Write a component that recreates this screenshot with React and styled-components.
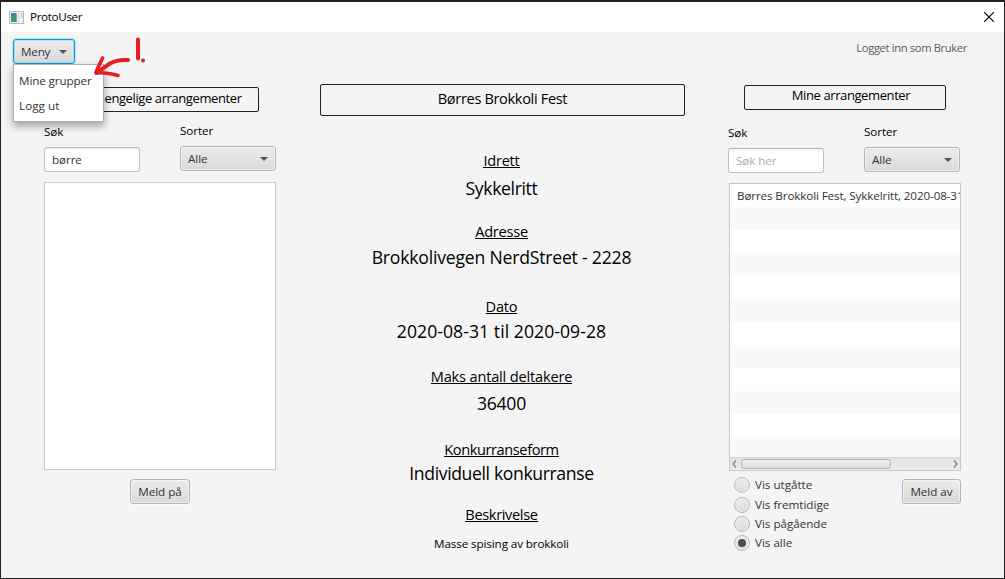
import React from 'react';
import styled, { createGlobalStyle, css } from 'styled-components';

const GlobalStyle = createGlobalStyle`
  * { box-sizing: border-box; }
  body { margin: 0; background: #1f1f1f; overflow: hidden; }
`;

const Window = styled.div`
  position: relative;
  width: 1005px;
  height: 579px;
  display: flex;
  flex-direction: column;
  border: 1px solid #222224;
  border-top-width: 2px;
  background: #f4f4f4;
  color: #333;
  font-family: 'Open Sans', 'Noto Sans', sans-serif;
  font-size: 11.68px;
  line-height: 16px;
  white-space: nowrap;
  overflow: hidden;
`;

const TitleBar = styled.header`
  display: flex;
  align-items: center;
  height: 30px;
  flex: none;
  padding: 0 10px 0 8px;
  background: #fff;
`;

const AppTitle = styled.span`
  margin-left: 6px;
  flex: 1;
  color: #000;
  letter-spacing: -0.35px;
`;

const Header = styled.div`
  display: flex;
  justify-content: space-between;
  align-items: flex-start;
  height: 52px;
  flex: none;
  padding: 7px 37px 0 12px;
`;

const MenuAnchor = styled.div`
  position: relative;
`;

const raised = css`
  border: 1px solid #b5b5b5;
  border-radius: 3px;
  background: linear-gradient(#ececec, #d9d9d9);
  box-shadow: inset 0 0 0 1px rgba(255, 255, 255, 0.55), 0 1px 0 #fbfbfb;
  color: #333;
  font: inherit;
`;

const MenuButton = styled.button`
  ${raised}
  display: flex;
  align-items: center;
  justify-content: space-between;
  width: 62px;
  height: 25px;
  padding: 0 7px;
  border-color: #039ed3;
  box-shadow: inset 0 0 0 1px #b4dff0, 0 0 2px #4fbfe3;
  letter-spacing: -0.2px;
`;

const Caret = styled.i`
  border: 4px solid transparent;
  border-top-color: #555;
  border-bottom: 0;
`;

const Menu = styled.div`
  position: absolute;
  z-index: 1;
  top: 25px;
  left: 0;
  width: 91px;
  height: 58px;
  padding: 3px 5px;
  border: 1px solid #b0b0b0;
  background: #fff;
  box-shadow: 0 4px 8px rgba(0, 0, 0, 0.35);
`;

const MenuItem = styled.div`
  line-height: 25px;
  letter-spacing: ${(p) => p.$spacing || 0}px;
`;

const LoggedIn = styled.span`
  margin-top: 1px;
  color: #5c5c5c;
  font-size: 11.2px;
  letter-spacing: -0.35px;
`;

const Columns = styled.main`
  display: grid;
  grid-template-columns: 232px 365px 233px;
  column-gap: 44px;
  padding-left: 43px;
`;

const Side = styled.section`
  padding-top: ${(p) => p.$top}px;
  margin-left: ${(p) => p.$shift || 0}px;
`;

const Heading = styled.h1`
  height: ${(p) => p.$height}px;
  width: ${(p) => p.$width}px;
  margin: 0 0 0 ${(p) => p.$left || 0}px;
  padding: ${(p) => p.$pad || 0};
  border: 1px solid #222;
  border-radius: 2px;
  color: #000;
  font-size: ${(p) => p.$size}px;
  font-weight: 400;
  line-height: 18px;
  letter-spacing: ${(p) => p.$spacing || 0}px;
  text-align: center;
`;

const Filters = styled.div`
  display: flex;
  justify-content: space-between;
  width: 232px;
  margin-top: ${(p) => p.$top}px;
`;

const Filter = styled.label`
  display: flex;
  flex-direction: column;
  gap: 7px;
  width: 96px;
  padding-top: ${(p) => p.$offset || 0}px;
  color: #000;
  letter-spacing: -0.08px;
`;

const Search = styled.input`
  width: 96px;
  height: 25px;
  padding: 0 7px;
  border: 1px solid #c3c3c3;
  border-top-color: #b5b5b5;
  border-radius: 3px;
  background: linear-gradient(#f2f2f2, #fff 4px);
  color: #333;
  font: inherit;
  letter-spacing: -0.1px;
  outline: none;
  &::placeholder { color: #ababab; opacity: 1; }
`;

const Combo = styled.div`
  ${raised}
  display: flex;
  align-items: center;
  justify-content: space-between;
  height: 25px;
  padding: 0 7px;
`;

const EventList = styled.div`
  display: flex;
  flex-direction: column;
  width: 232px;
  height: 288px;
  margin: ${(p) => p.$top}px 0 0 ${(p) => p.$left || 0}px;
  border: 1px solid #c8c8c8;
  background: #fff;
  overflow: hidden;
`;

const Row = styled.div`
  flex: none;
  height: 23px;
  padding-left: 7px;
  line-height: 24px;
  letter-spacing: -0.13px;
  background: #fff;
  &:nth-child(even) { background: #f9f9f9; }
`;

const Rows = styled.div`
  height: 273px;
  flex: none;
  overflow: hidden;
`;

const ScrollBar = styled.div`
  display: flex;
  align-items: center;
  height: 13px;
  padding: 0 2px;
  border-top: 1px solid #d6d6d6;
  background: linear-gradient(#e2e2e2, #ededed);
`;

const Thumb = styled.div`
  width: 150px;
  height: 10px;
  margin: 0 auto 0 4px;
  border: 1px solid #b4b4b4;
  border-radius: 3px;
  background: linear-gradient(#f0f0f0, #dedede);
`;

const Action = styled.button`
  ${raised}
  display: block;
  width: ${(p) => p.$width}px;
  height: 25px;
  margin: ${(p) => p.$margin || 0};
  padding: 0;
  letter-spacing: -0.05px;
`;

const Footer = styled.div`
  display: flex;
  justify-content: space-between;
  padding: 4px 1px 0 6px;
`;

const Choices = styled.div`
  display: flex;
  flex-direction: column;
`;

const Choice = styled.label`
  display: flex;
  align-items: center;
  gap: 5px;
  height: ${(p) => p.$height || 19}px;
  letter-spacing: -0.03px;
`;

const Dot = styled.span`
  display: grid;
  place-items: center;
  width: 16px;
  height: 16px;
  border: 1px solid #b8b8b8;
  border-radius: 50%;
  background: linear-gradient(#ececec, #dcdcdc);
  box-shadow: inset 0 0 0 1px rgba(255, 255, 255, 0.4), 0 1px 0 #fbfbfb;
  &::after {
    content: '';
    width: 8px;
    height: 8px;
    border-radius: 50%;
    background: ${(p) => (p.$on ? '#4d4d4d' : 'transparent')};
  }
`;

const Details = styled.section`
  display: flex;
  flex-direction: column;
  color: #000;
`;

const Field = styled.div`
  display: flex;
  flex-direction: column;
  align-items: center;
  gap: ${(p) => p.$gap}px;
  margin-top: ${(p) => p.$top}px;
  padding-right: 2px;
`;

const FieldName = styled.span`
  border-bottom: 1px solid #000;
  height: 18px;
  margin-bottom: 2px;
  font-size: 14.6px;
  line-height: 20px;
  letter-spacing: ${(p) => p.$spacing || 0}px;
`;

const FieldValue = styled.span`
  font-size: ${(p) => (p.$small ? 11.68 : 17.6)}px;
  line-height: ${(p) => (p.$small ? 16 : 24)}px;
  letter-spacing: ${(p) => p.$spacing || 0}px;
`;

const Annotation = styled.svg`
  position: absolute;
  z-index: 2;
  top: 34px;
  left: 89px;
  pointer-events: none;
`;

const AppIcon = () => (
  <svg width="15" height="13" viewBox="0 0 15 13">
    <rect x="0.5" y="0.5" width="14" height="12" fill="#f4f4f6" stroke="#b4b7bd" />
    <rect x="2" y="2" width="5.500" height="9" fill="#4a7fa0" />
    <path d="M2 7l5.500-3v7H2z" fill="#47926f" />
    <rect x="8.500" y="2" width="2.500" height="9" fill="#dfe3e6" />
    <rect x="12" y="2" width="1.500" height="5" fill="#b9d3c5" />
  </svg>
);

const CloseIcon = () => (
  <svg width="10" height="10" viewBox="0 0 10 10">
    <path d="M0 0L10 10M10 0L0 10" stroke="#000" strokeWidth="1.1" />
  </svg>
);

const Chevron = ({ right }) => (
  <svg width="5" height="8" viewBox="0 0 5 8">
    <path d={right ? 'M1 0.5L4 4L1 7.5' : 'M4 0.5L1 4L4 7.5'} fill="none" stroke="#7d7d7d" strokeWidth="1.2" />
  </svg>
);

const Pointer = () => (
  <Annotation width="62" height="46" viewBox="90 36 62 46" fill="none" stroke="#e61e1e" strokeWidth="4" strokeLinecap="round" strokeLinejoin="round">
    <path d="M128 60C120 59.500 115 60.500 110 63.500C105 66.500 101 70 96.500 73" />
    <path d="M102.500 58C100 64 97 68.500 96 73C103 72 111 73.500 118 75.500" strokeWidth="3.600" />
    <path d="M138 39.500V58.500" />
    <circle cx="143" cy="60.500" r="2" fill="#e61e1e" stroke="none" />
  </Annotation>
);

const fields = [
  { name: 'Idrett', value: 'Sykkelritt', top: 34, gap: 6, nameSpacing: -0.25, valueSpacing: -0.35 },
  { name: 'Adresse', value: 'Brokkolivegen NerdStreet - 2228', top: 21, gap: 4, nameSpacing: -0.25, valueSpacing: -0.2 },
  { name: 'Dato', value: '2020-08-31 til 2020-09-28', top: 27, gap: 3, nameSpacing: -0.2, valueSpacing: 0.06 },
  { name: 'Maks antall deltakere', value: '36400', top: 23, gap: 5, nameSpacing: -0.18, valueSpacing: -0.3 },
  { name: 'Konkurranseform', value: 'Individuell konkurranse', top: 24, gap: 2, nameSpacing: -0.42, valueSpacing: -0.37 },
  { name: 'Beskrivelse', value: 'Masse spising av brokkoli', top: 19, gap: 12, small: true, nameSpacing: -0.36, valueSpacing: -0.12 },
];

const FilterBar = ({ top, ...input }) => (
  <Filters $top={top}>
    <Filter $offset={1}>
      Søk
      <Search {...input} />
    </Filter>
    <Filter>
      Sorter
      <Combo>Alle<Caret /></Combo>
    </Filter>
  </Filters>
);

export default function App() {
  return (
    <Window>
      <GlobalStyle />
      <TitleBar>
        <AppIcon />
        <AppTitle>ProtoUser</AppTitle>
        <CloseIcon />
      </TitleBar>
      <Header>
        <MenuAnchor>
          <MenuButton>Meny<Caret /></MenuButton>
          <Menu>
            <MenuItem $spacing={-0.12}>Mine grupper</MenuItem>
            <MenuItem $spacing={0.05}>Logg ut</MenuItem>
          </Menu>
        </MenuAnchor>
        <LoggedIn>Logget inn som Bruker</LoggedIn>
      </Header>
      <Columns>
        <Side $top={3}>
          <Heading $height={25} $width={202} $left={13} $pad="1px 0 0 8px" $size={13} $spacing={-0.4}>
            Tilgjengelige arrangementer
          </Heading>
          <FilterBar top={11} defaultValue="børre" />
          <EventList $top={10} />
          <Action $width={60} $margin="9px 0 0 86px">Meld på</Action>
        </Side>
        <Details>
          <Heading $height={32} $width={365} $pad="4px 0 0" $size={14.6} $spacing={-0.35}>
            Børres Brokkoli Fest
          </Heading>
          {fields.map((f) => (
            <Field key={f.name} $top={f.top} $gap={f.gap}>
              <FieldName $spacing={f.nameSpacing}>{f.name}</FieldName>
              <FieldValue $small={f.small} $spacing={f.valueSpacing}>{f.value}</FieldValue>
            </Field>
          ))}
        </Details>
        <Side $top={1} $shift={-1}>
          <Heading $height={25} $width={202} $left={16} $pad="0 0 0 12px" $size={13} $spacing={-0.4}>
            Mine arrangementer
          </Heading>
          <FilterBar top={14} placeholder="Søk her" />
          <EventList $top={10} $left={1}>
            <Rows>
              <Row>Børres Brokkoli Fest, Sykkelritt, 2020-08-31 til 2020-09-28</Row>
              {Array.from({ length: 11 }, (_, i) => <Row key={i} />)}
            </Rows>
            <ScrollBar>
              <Chevron />
              <Thumb />
              <Chevron right />
            </ScrollBar>
          </EventList>
          <Footer>
            <Choices>
              <Choice $height={20}><Dot />Vis utgåtte</Choice>
              <Choice><Dot />Vis fremtidige</Choice>
              <Choice><Dot />Vis pågående</Choice>
              <Choice><Dot $on />Vis alle</Choice>
            </Choices>
            <Action $width={59} $margin="4px 0 0">Meld av</Action>
          </Footer>
        </Side>
      </Columns>
      <Pointer />
    </Window>
  );
}
